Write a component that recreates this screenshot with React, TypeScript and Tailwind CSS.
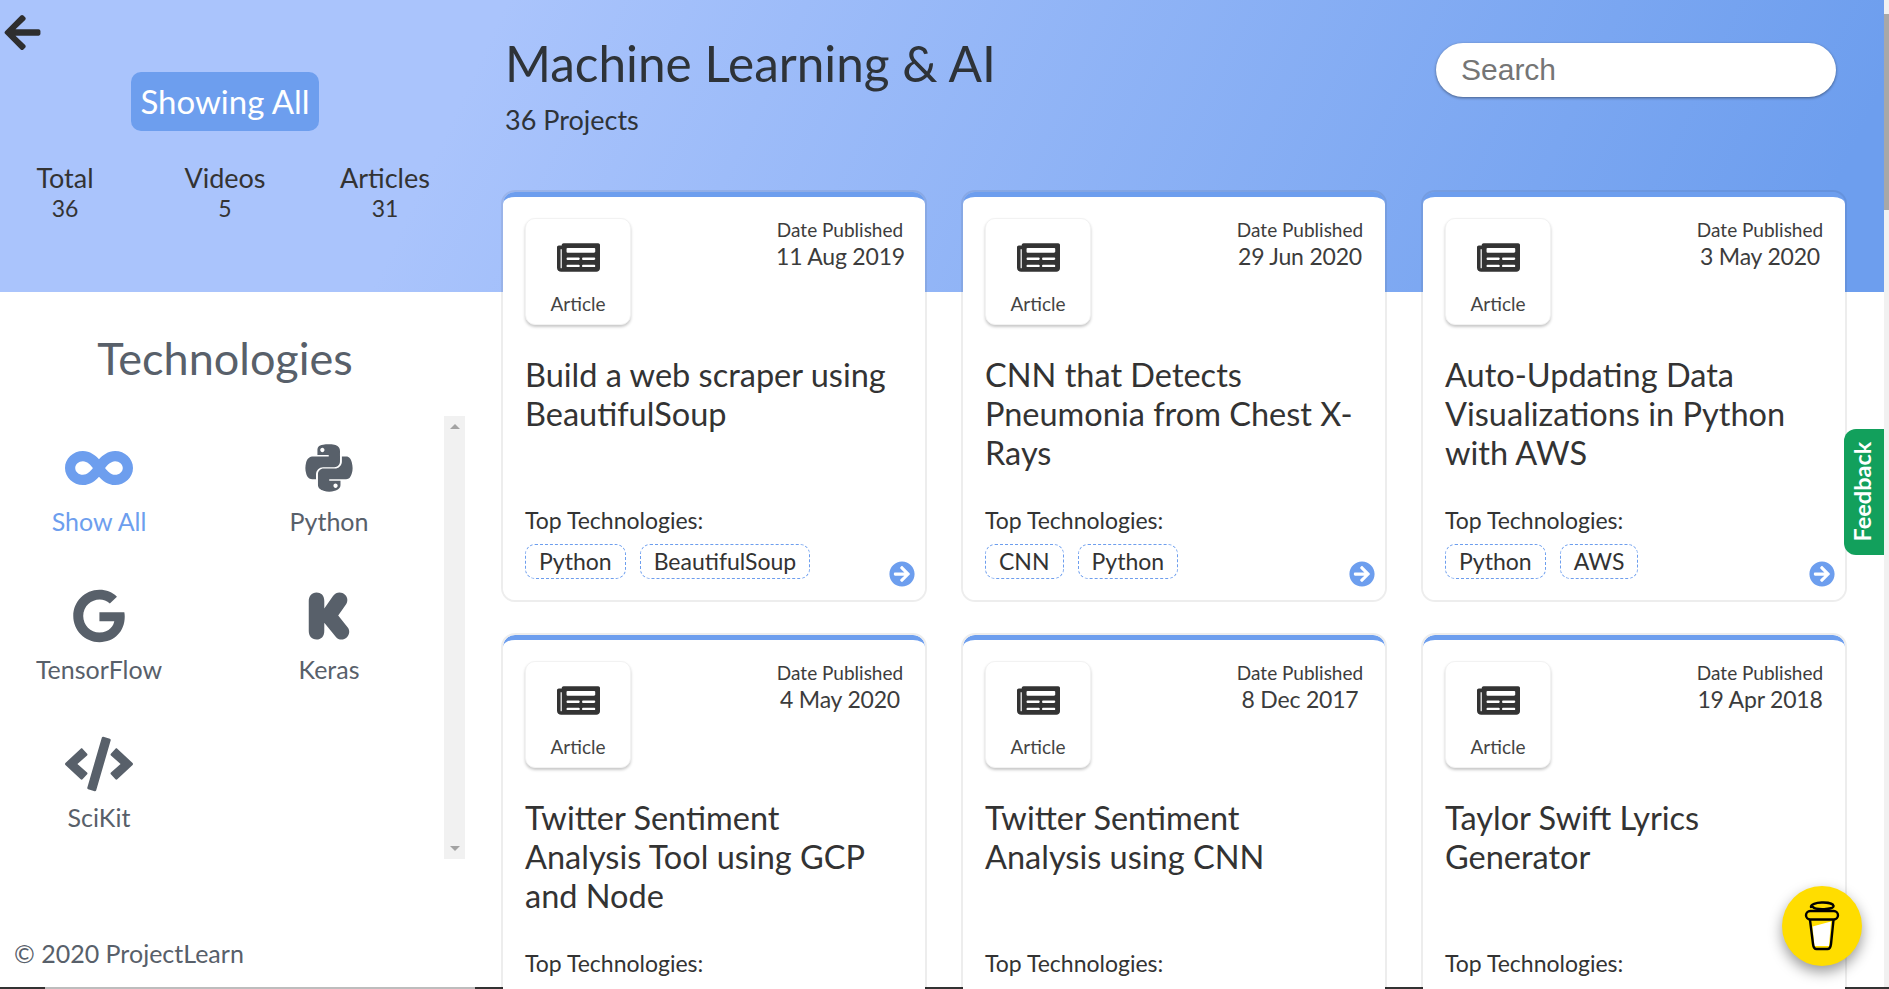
import { FaArrowCircleRight, FaArrowLeft, FaCode, FaGoogle, FaInfinity, FaKickstarterK, FaNewspaper, FaPython } from "react-icons/fa";

const technologies = [
  { icon: FaInfinity, label: "Show All", size: "text-[68px]", active: true },
  { icon: FaPython, label: "Python", size: "text-[54px]" },
  { icon: FaGoogle, label: "TensorFlow", size: "text-[54px]" },
  { icon: FaKickstarterK, label: "Keras", size: "text-[54px]" },
  { icon: FaCode, label: "SciKit", size: "text-[68px]" },
];

const stats = [
  { label: "Total", value: 36 },
  { label: "Videos", value: 5 },
  { label: "Articles", value: 31 },
];

const projects = [
  { title: "Build a web scraper using BeautifulSoup", date: "11 Aug 2019", tech: ["Python", "BeautifulSoup"] },
  { title: "CNN that Detects Pneumonia from Chest X-Rays", date: "29 Jun 2020", tech: ["CNN", "Python"] },
  { title: "Auto-Updating Data Visualizations in Python with AWS", date: "3 May 2020", tech: ["Python", "AWS"] },
  { title: "Twitter Sentiment Analysis Tool using GCP and Node", date: "4 May 2020", tech: [] },
  { title: "Twitter Sentiment Analysis using CNN", date: "8 Dec 2017", tech: [] },
  { title: "Taylor Swift Lyrics Generator", date: "19 Apr 2018", tech: [] },
];

type Project = (typeof projects)[number];

const ProjectCard = ({ project }: { project: Project }) => (
  <div className="relative h-[412px] overflow-hidden rounded-[14px] border-2 border-black/[0.07] bg-clip-padding">
    <div className="flex h-full flex-col rounded-[12px] border-t-[5px] border-[#6d9eee] bg-white px-[22px] pt-[21px]">
      <div className="flex items-start justify-between">
        <div className="flex h-[107px] w-[106px] flex-col items-center rounded-[10px] border border-[#f2f2f2] bg-white pt-[17px] shadow-[0_2px_3px_rgba(0,0,0,0.22)]">
          <FaNewspaper className="text-[43px] leading-none text-[#333]" />
          <span className="mt-[13px] text-[19px] leading-[24px] text-[#444]">Article</span>
        </div>
        <div className="-mr-[1px] w-[128px] text-center text-[#3c3c3c]">
          <div className="text-[19px] leading-[24px] whitespace-nowrap">Date Published</div>
          <div className="text-[23px] leading-[28px] tracking-[-0.2px] whitespace-nowrap">{project.date}</div>
        </div>
      </div>
      <h3 className="mt-[30px] h-[117px] pr-[8px] text-[32.5px] leading-[39px] font-normal text-[#333]">{project.title}</h3>
      <div className="mt-[34px] text-[23px] leading-[28px] text-[#333]">Top Technologies:</div>
      <div className="mt-[10px] flex gap-[14px]">
        {project.tech.map((t) => (
          <span key={t} className="flex h-[35px] items-center rounded-[10px] border border-dashed border-[#6d9eee] px-[13px] text-[23px] text-[#333]">
            {t}
          </span>
        ))}
      </div>
      <FaArrowCircleRight className="absolute right-[10px] bottom-[13px] text-[26px] text-[#6d9eee]" />
    </div>
  </div>
);

export default function App() {
  return (
    <div className="relative h-[989px] w-full overflow-hidden bg-white font-['Lato',sans-serif]">
      <div className="flex h-[987px] bg-[linear-gradient(115deg,#aac4fc_0%,#aac4fc_25%,#6d9eee_95%)] bg-[length:100%_292px] bg-no-repeat">
        {/* sidebar */}
        <aside className="flex w-[501px] shrink-0 flex-col">
          <div className="h-[292px] w-[450px]">
            <FaArrowLeft className="mt-[12px] ml-[2px] text-[41px] text-[#2e2e2e]" />
            <div className="mt-[19px] flex justify-center">
              <div className="flex h-[59px] w-[188px] items-center justify-center rounded-[10px] bg-[#6d9eee] text-[33px] text-white">
                Showing All
              </div>
            </div>
            <div className="mt-[31px] grid grid-cols-3 gap-x-[60px] px-[15px] text-center text-[#333]">
              {stats.map((s) => (
                <div key={s.label}>
                  <div className="text-[27px] leading-[32px]">{s.label}</div>
                  <div className="text-[23px] leading-[28px]">{s.value}</div>
                </div>
              ))}
            </div>
          </div>
          <h2 className="mt-[36px] w-[450px] text-center text-[45px] leading-[60px] font-normal text-[#58606a]">Technologies</h2>
          <div className="mt-[28px] flex h-[443px] w-[465px]">
            <div className="grid flex-1 auto-rows-[148px] grid-cols-[198px_198px] gap-x-8">
              {technologies.map((t) => (
                <div key={t.label} className={`flex flex-col items-center pt-[14px] ${t.active ? "text-[#6d9eee]" : "text-[#58606a]"}`}>
                  <div className="flex h-[76px] items-center">
                    <t.icon className={t.size} />
                  </div>
                  <span className="text-[25px] leading-[30px]">{t.label}</span>
                </div>
              ))}
            </div>
            <div className="flex w-[21px] flex-col items-center justify-between bg-[#f1f1f1] py-[8px]">
              <div className="h-0 w-0 border-x-[5px] border-b-[5px] border-x-transparent border-b-[#a3a3a3]" />
              <div className="h-0 w-0 border-x-[5px] border-t-[5px] border-x-transparent border-t-[#a3a3a3]" />
            </div>
          </div>
          <div className="mt-[79px] pl-[14px] text-[25px] leading-[30px] text-[#58606a]">© 2020 ProjectLearn</div>
        </aside>

        {/* main */}
        <main className="min-w-0 flex-1 pr-[37px]">
          <div className="flex h-[190px] items-start justify-between pr-[11px] pl-[4px]">
            <div className="pt-[32px] text-[#2e3338]">
              <h1 className="text-[49.5px] leading-[62px] font-normal">Machine Learning &amp; AI</h1>
              <p className="mt-[10px] text-[27px] leading-[32px]">36 Projects</p>
            </div>
            <input
              placeholder="Search"
              className="mt-[43px] h-[54px] w-[400px] rounded-full bg-white pl-[25px] font-['Liberation_Sans',sans-serif] text-[30px] shadow-[0_1px_3px_rgba(0,0,0,0.45)] outline-none placeholder:text-[#757575]"
            />
          </div>
          <div className="grid grid-cols-3 gap-x-[34px] gap-y-[31px]">
            {projects.map((p) => (
              <ProjectCard key={p.title} project={p} />
            ))}
          </div>
        </main>

        {/* page scrollbar */}
        <div className="w-[5px] shrink-0 bg-[#f1f1f1] pt-[14px]">
          <div className="h-[196px] bg-[#a8a8a8]" />
        </div>
      </div>

      {/* bottom edge of the window */}
      <div className="flex h-[2px]">
        <div className="w-[45px] bg-[#333]" />
        <div className="w-[430px] bg-[#bdbdbd]" />
        <div className="w-[126px] bg-[#333]" />
        <div className="w-[60px] bg-[#666]" />
        <div className="flex-1 bg-[#333]" />
      </div>

      <div className="absolute top-[429px] right-[5px] flex h-[126px] w-[40px] items-center justify-center rounded-l-[12px] bg-[#12a05c] pr-[2px]">
        <span className="-rotate-90 text-[23.5px] font-bold whitespace-nowrap text-white">Feedback</span>
      </div>

      <div className="absolute top-[886px] left-[1782px] flex h-[80px] w-[80px] items-center justify-center rounded-full bg-[#ffdd00] shadow-[0_6px_14px_rgba(0,0,0,0.4)]">
        <svg width="36" height="52" viewBox="0 0 36 52" fill="none" stroke="#000" strokeWidth="2.4" strokeLinejoin="round" strokeLinecap="round">
          <path d="M8.5 26.5 L27 21.5 L25 46 L10.5 46 Z" fill="#fff" stroke="none" />
          <path d="M6 20 L9 44 Q9.6 49 12.5 49 L23.5 49 Q26.4 49 27 44 L29.5 20" />
          <path d="M7 7 C6 1.5 29 1 29.5 6 C30 10 11 10 9 7" />
          <rect x="2" y="11" width="32" height="8.5" rx="4.2" fill="#ffdd00" />
        </svg>
      </div>
    </div>
  );
}
